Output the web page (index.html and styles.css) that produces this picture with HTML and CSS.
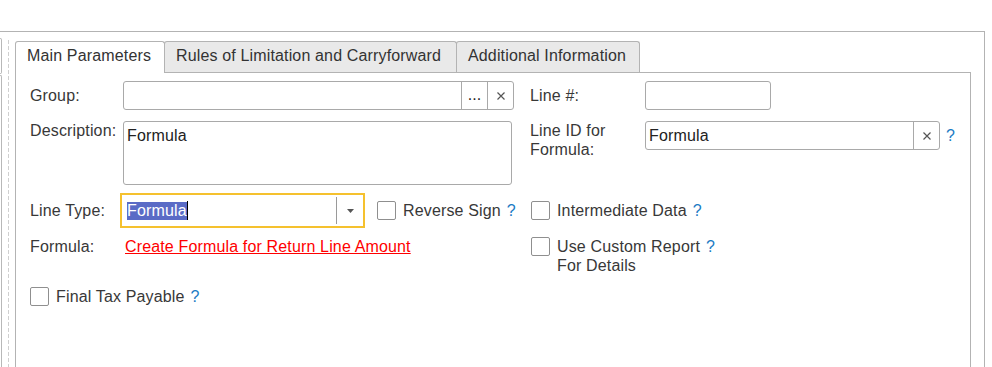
FILE: index.html
```html
<!DOCTYPE html>
<html lang="en">
<head>
<meta charset="utf-8">
<title>Main Parameters</title>
<link rel="stylesheet" href="styles.css">
</head>
<body>
<div class="frame">
  <div class="side">
    <div class="side-boxes">
      <div class="sbox sbox-top"></div>
      <div class="sbox sbox-bottom"></div>
    </div>
    <div class="dash"></div>
  </div>
  <div class="tabs-wrap">
    <div class="tabs">
      <div class="tab tab-main active">Main Parameters</div>
      <div class="tab tab-rules">Rules of Limitation and Carryforward</div>
      <div class="tab tab-add">Additional Information</div>
    </div>
    <div class="panel">
      <div class="row r1">
        <div class="lbl">Group:</div>
        <div class="ctl">
          <div class="ingroup w-group">
            <span class="infield"></span>
            <span class="btn dots">...</span>
            <span class="btn clear"><svg width="8" height="8" viewBox="0 0 8 8"><path d="M0.5 0.5L7.5 7.5M7.5 0.5L0.5 7.5" stroke="#555" stroke-width="1.2" fill="none"/></svg></span>
          </div>
        </div>
        <div class="lbl">Line #:</div>
        <div class="ctl"><div class="ingroup w-line"><span class="infield"></span></div></div>
      </div>

      <div class="row r2">
        <div class="lbl">Description:</div>
        <div class="ctl"><div class="textarea">Formula</div></div>
        <div class="lbl">Line ID for<br>Formula:</div>
        <div class="ctl ctl-help">
          <div class="ingroup w-lineid">
            <span class="infield">Formula</span>
            <span class="btn clear"><svg width="8" height="8" viewBox="0 0 8 8"><path d="M0.5 0.5L7.5 7.5M7.5 0.5L0.5 7.5" stroke="#555" stroke-width="1.2" fill="none"/></svg></span>
          </div>
          <span class="help">?</span>
        </div>
      </div>

      <div class="row r3">
        <div class="lbl">Line Type:</div>
        <div class="ctl ctl-type">
          <div class="select">
            <span class="sel-text"><span class="hl">Formula</span><span class="caret"></span></span>
            <span class="sel-arrow"><svg width="7" height="4" viewBox="0 0 7 4"><path d="M0 0H7L3.5 4Z" fill="#555"/></svg></span>
          </div>
          <label class="check check-rev"><span class="box"></span><span>Reverse Sign</span><span class="help">?</span></label>
        </div>
        <div class="rcol">
          <label class="check"><span class="box"></span><span>Intermediate Data</span><span class="help">?</span></label>
        </div>
      </div>

      <div class="row r4">
        <div class="lbl">Formula:</div>
        <div class="ctl"><a class="link" href="#">Create Formula for Return Line Amount</a></div>
        <div class="rcol">
          <label class="check check-top"><span class="box"></span><span class="twoline">Use Custom Report<span class="help">?</span><br>For Details</span></label>
        </div>
      </div>

      <div class="row r5">
        <label class="check check-final"><span class="box"></span><span>Final Tax Payable</span><span class="help">?</span></label>
      </div>
    </div>
  </div>
</div>
</body>
</html>
```

FILE: styles.css
```css
* { box-sizing: border-box; }

html, body {
  margin: 0;
  padding: 0;
  background: #fff;
  overflow: hidden;
}

body {
  font-family: "Liberation Sans", Arial, sans-serif;
  font-size: 16px;
  line-height: 19px;
  letter-spacing: 0.15px;
  color: #383838;
}

.frame {
  display: flex;
  width: 985px;
  height: 336px;
  margin-top: 31px;
  border-top: 1px solid #b3b3b3;
  border-right: 1px solid #b3b3b3;
}

/* left strip */
.side {
  flex: none;
  width: 15px;
  display: flex;
}

.side-boxes {
  width: 2px;
  display: flex;
  flex-direction: column;
  gap: 1px;
  padding-top: 6px;
}

.sbox {
  border: 1px solid #b8b8b8;
  border-left: none;
}

.sbox-top {
  height: 36px;
  border-radius: 0 3px 3px 0;
}

.sbox-bottom {
  flex: 1;
  border-bottom: none;
  border-radius: 0 3px 0 0;
}

.dash {
  width: 1px;
  margin-left: 6px;
  margin-top: 8px;
  background: repeating-linear-gradient(to bottom, #cfcfcf 0 4px, transparent 4px 6px);
}

/* tabs */
.tabs-wrap {
  flex: none;
  width: 956px;
  padding-top: 9px;
  display: flex;
  flex-direction: column;
}

.tabs {
  display: flex;
  align-items: flex-start;
  height: 31px;
}

.tab {
  height: 31px;
  padding: 5px 0 0 11px;
  line-height: 18px;
  border: 1px solid #b3b3b3;
  border-bottom: none;
  border-radius: 3px 3px 0 0;
  background: #e9e9e9;
  color: #333;
  margin-right: -1px;
  white-space: nowrap;
}

.tab.active {
  position: relative;
  z-index: 1;
  height: 32px;
  background: #fff;
}

.tab-main { width: 150px; }
.tab-rules { width: 293px; }
.tab-add { width: 184px; }

.panel {
  flex: 1;
  border: 1px solid #b3b3b3;
  border-bottom: none;
  padding: 8px 0 0 14px;
}

/* form rows */
.row {
  display: grid;
  grid-template-columns: 93px 407px 115px 1fr;
}

.r1 { height: 29px; align-items: center; }
.r2 { margin-top: 11px; height: 64px; align-items: start; }
.r3 { margin-top: 8px; height: 35px; align-items: center; }
.r4 { margin-top: 9px; height: 38px; align-items: start; }
.r5 { margin-top: 12px; }

.lbl { color: #383838; }

.ingroup {
  display: flex;
  height: 29px;
  border: 1px solid #a9a9a9;
  border-radius: 3px;
  background: #fff;
}

.w-group { width: 391px; }
.w-line { width: 126px; }
.w-lineid { width: 295px; }

.infield {
  flex: 1;
  padding-left: 3px;
  line-height: 27px;
  color: #222;
}

.btn {
  flex: none;
  width: 26px;
  border-left: 1px solid #a9a9a9;
  display: flex;
  align-items: center;
  justify-content: center;
  color: #222;
}

.dots {
  align-items: flex-start;
  line-height: 25px;
  letter-spacing: 0;
}

.textarea {
  width: 389px;
  height: 64px;
  border: 1px solid #a9a9a9;
  border-radius: 3px;
  padding: 4px 3px;
  color: #222;
}

.ctl-help {
  display: flex;
  align-items: center;
}

.help {
  color: #1b7bc4;
  margin-left: 6px;
}

/* select */
.ctl-type {
  display: flex;
  align-items: center;
  margin-left: -3px;
}

.select {
  display: flex;
  width: 245px;
  height: 35px;
  border: 2px solid #f5c12e;
  background: #fff;
}

.sel-text {
  flex: 1;
  display: flex;
  align-items: center;
  padding-left: 5px;
}

.hl {
  background: #5a6bc6;
  color: #fff;
  line-height: 18px;
}

.caret {
  width: 1px;
  height: 19px;
  background: #000;
}

.sel-arrow {
  flex: none;
  width: 27px;
  margin: 2px 0;
  border-left: 1px solid #9a9a9a;
  display: flex;
  align-items: center;
  justify-content: center;
}

/* checkboxes */
.check {
  display: flex;
  align-items: center;
  color: #383838;
  white-space: nowrap;
}

.check .box {
  flex: none;
  width: 19px;
  height: 19px;
  border: 1px solid #8f8f8f;
  border-radius: 2px;
  background: #fff;
  margin-right: 7px;
}

.check-rev { margin-left: 12px; }

.rcol { grid-column: 3 / 5; padding-left: 1px; }

.check-top { align-items: flex-start; }

.check-final { grid-column: 1 / 3; }

.link {
  color: #f00;
  text-decoration: underline;
  margin-left: 2px;
  display: inline-block;
}
```
